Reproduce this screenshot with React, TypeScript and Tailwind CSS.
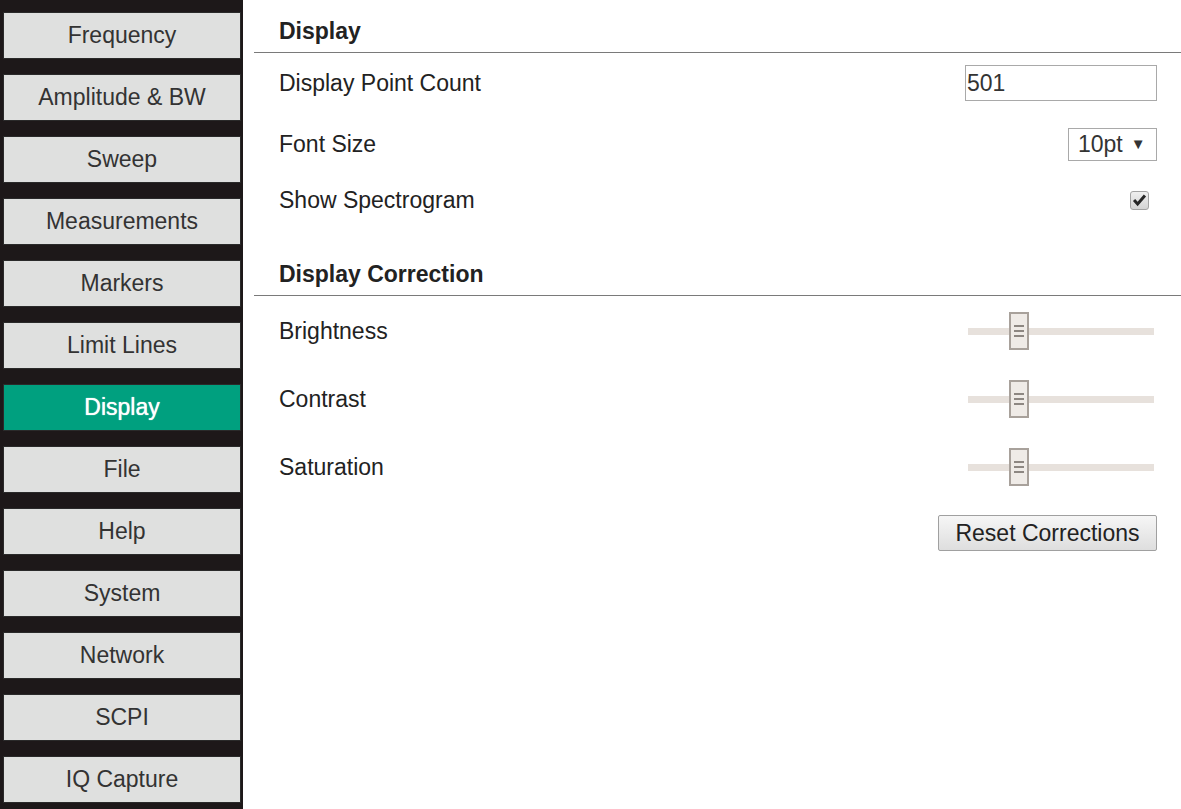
import { useState } from "react";

const items = [
  "Frequency",
  "Amplitude & BW",
  "Sweep",
  "Measurements",
  "Markers",
  "Limit Lines",
  "Display",
  "File",
  "Help",
  "System",
  "Network",
  "SCPI",
  "IQ Capture",
];

function Slider() {
  return (
    <div className="relative flex h-[38px] w-[186px] items-center">
      <div className="h-[7px] w-full bg-[#e7e1dc]" />
      <div className="absolute left-[41px] top-0 flex h-[38px] w-[20px] flex-col items-center justify-center gap-[3px] border-2 border-[#a8a19b] bg-[#efebe7]">
        <span className="h-[2px] w-[10px] bg-[#8d8782]" />
        <span className="h-[2px] w-[10px] bg-[#8d8782]" />
        <span className="h-[2px] w-[10px] bg-[#8d8782]" />
      </div>
    </div>
  );
}

export default function App() {
  const [active, setActive] = useState("Display");
  const [count, setCount] = useState("501");
  const [spectro, setSpectro] = useState(true);

  return (
    <div className="flex h-[809px] w-[1181px] overflow-hidden bg-white font-['Liberation_Sans',Arial,sans-serif] text-[23px] text-[#222]">
      <div className="flex w-[243px] shrink-0 flex-col gap-[15px] bg-[#1d1819] pl-[3px] pr-[2px] pt-[12px]">
        {items.map((item) => (
          <button
            key={item}
            onClick={() => setActive(item)}
            className={`h-[47px] w-full shrink-0 border border-[#2a2a2a] leading-none ${
              item === active
                ? "bg-[#00a07f] text-white [text-shadow:0_0_1px_#fff]"
                : "bg-[#dfe0df] text-[#333]"
            }`}
          >
            {item}
          </button>
        ))}
      </div>

      <div className="flex-1 pl-[11px]">
        <div className="border-b border-[#7a7a7a] pb-[8px] pl-[25px] pt-[18px] font-bold leading-[26px]">
          Display
        </div>
        <div className="pl-[25px] pr-[24px]">
          <div className="flex h-[60px] items-center justify-between">
            <span>Display Point Count</span>
            <input
              value={count}
              onChange={(e) => setCount(e.target.value)}
              className="h-[36px] w-[192px] border border-[#a9a9a9] px-[1px] text-[23px] text-[#333] outline-none"
            />
          </div>
          <div className="flex h-[62px] items-center justify-between">
            <span>Font Size</span>
            <div className="flex h-[33px] w-[89px] items-center gap-[8px] border border-[#a9a9a9] pl-[9px] text-[#333]">
              <span>10pt</span>
              <span className="text-[15px]">▼</span>
            </div>
          </div>
          <div className="flex h-[50px] items-center justify-between">
            <span>Show Spectrogram</span>
            <button
              onClick={() => setSpectro(!spectro)}
              className="mr-[8px] flex h-[19px] w-[19px] items-center justify-center rounded-[3px] border border-[#a3a3a3] bg-gradient-to-b from-[#efefef] to-[#d4d4d4]"
            >
              {spectro && (
                <svg viewBox="0 0 16 16" className="h-[15px] w-[15px]">
                  <path d="M1 8.5 L6 14 L15 3.8 L12.6 1.5 L6 9.3 L3.4 6.3 Z" fill="#262626" />
                </svg>
              )}
            </button>
          </div>
        </div>
        <div className="border-b border-[#7a7a7a] pb-[8px] pl-[25px] pt-[36px] font-bold leading-[26px]">
          Display Correction
        </div>
        <div className="pl-[25px] pr-[24px] pt-[1px]">
          {["Brightness", "Contrast", "Saturation"].map((label) => (
            <div key={label} className="flex h-[68px] items-center justify-between">
              <span>{label}</span>
              <div className="mr-[3px]">
                <Slider />
              </div>
            </div>
          ))}
          <div className="mt-[14px] flex justify-end">
            <button className="h-[36px] w-[219px] rounded-[2px] border border-[#a0a0a0] bg-gradient-to-b from-[#f6f6f6] to-[#dedede] text-[#222]">
              Reset Corrections
            </button>
          </div>
        </div>
      </div>
    </div>
  );
}
